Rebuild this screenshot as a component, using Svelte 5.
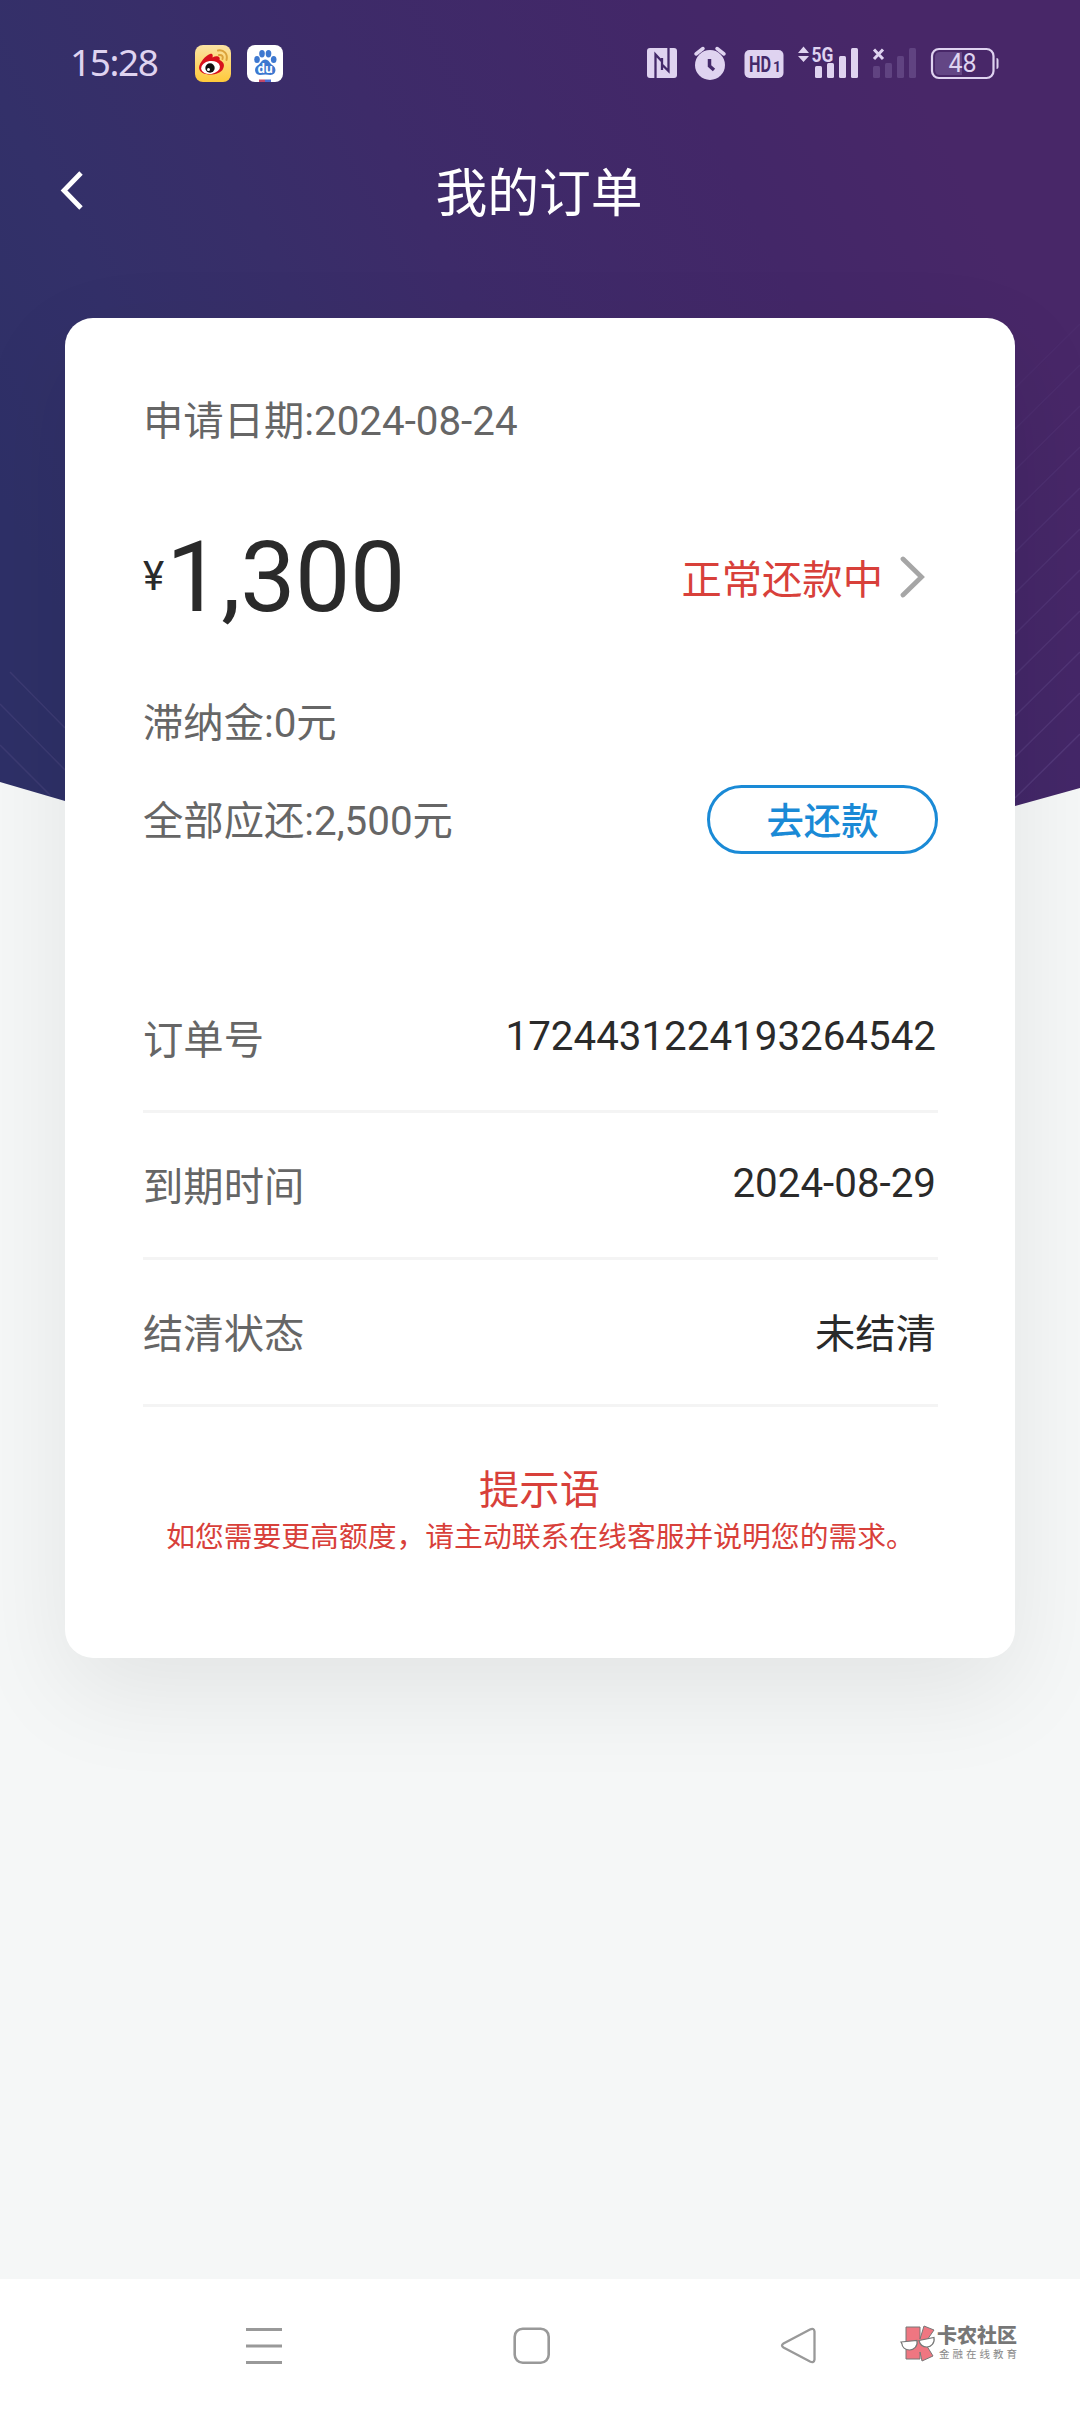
<script>
  const rows = [
    { label: '订单号', value: '1724431224193264542', latin: true },
    { label: '到期时间', value: '2024-08-29', latin: true },
    { label: '结清状态', value: '未结清', latin: false }
  ];
  // Faint diagonal rays on the right side of the banner
  const rays = Array.from({ length: 11 }, (_, i) => ({ y: 798 - i * 41, o: 0.2 - i * 0.014 }));
</script>

<div class="screen">
  <svg class="hero" viewBox="0 0 1080 836" width="1080" height="836" aria-hidden="true">
    <defs>
      <linearGradient id="hero" x1="0" y1="500" x2="900" y2="50" gradientUnits="userSpaceOnUse">
        <stop offset="0" stop-color="#2e3067" />
        <stop offset="0.18" stop-color="#333069" />
        <stop offset="0.35" stop-color="#382e69" />
        <stop offset="0.5" stop-color="#3d2b69" />
        <stop offset="0.8" stop-color="#432768" />
        <stop offset="1" stop-color="#482768" />
      </linearGradient>
    </defs>
    <path d="M0 0H1080V788L1015 806L900 836H190L65 801L0 782Z" fill="url(#hero)" />
    <g stroke="#8b78b8" stroke-width="1.5" fill="none">
      <path d="M10 672L65 728M0 704L65 770M0 745L50 795" stroke-opacity="0.15" />
      {#each rays as ray}
        <path d="M1015 {ray.y}L1080 {ray.y - 64}" stroke-opacity={ray.o} />
      {/each}
    </g>
  </svg>

  <header class="status">
    <span class="clock">15:28</span>
    <svg class="app" viewBox="0 0 36 37" width="36" height="37">
      <defs><linearGradient id="wb" x1="0" y1="0" x2="0" y2="1"><stop offset="0" stop-color="#fbe3a4" /><stop offset="1" stop-color="#ffc93a" /></linearGradient></defs>
      <rect width="36" height="37" rx="8" fill="url(#wb)" />
      <path d="M4 23C4 18 11 10 15 9C18 8 18 11 17.500 12.500C21 10 26 11 24.500 15C29 17 30 20 28 24C25 31 5 32 4 23Z" fill="#d7101d" />
      <ellipse cx="15.500" cy="22.500" rx="9.500" ry="6.500" fill="#fff" transform="rotate(-8 15.500 22.500)" />
      <circle cx="15" cy="23" r="4.700" fill="#111" /><circle cx="13.500" cy="24.500" r="1.500" fill="#fff" />
      <path d="M23 5.500C29 4.500 33 9 31.500 15M24 10C27 9.500 28.500 11.500 27.500 14" fill="none" stroke="#dba23a" stroke-width="2" stroke-linecap="round" />
    </svg>
    <svg class="app second" viewBox="0 0 36 37" width="36" height="37">
      <rect width="36" height="37" rx="8" fill="#fff" />
      <g fill="#3d78d0">
        <ellipse cx="10" cy="14.500" rx="2.800" ry="3.600" /><ellipse cx="15" cy="8.700" rx="2.800" ry="3.700" />
        <ellipse cx="21.500" cy="8.700" rx="2.800" ry="3.700" /><ellipse cx="26.700" cy="14.500" rx="2.800" ry="3.600" />
        <path d="M18.300 14.500C22 14.500 22.500 18.500 26 20.500C30 23 29 30 23.500 30C20 29.200 17 29.200 13 30C7.500 30 6.500 23 10.500 20.500C14 18.500 14.500 14.500 18.300 14.500Z" />
      </g>
      <text class="du" x="18.200" y="27.700" text-anchor="middle">du</text>
      <path d="M12 34.500H18V37H12Z" fill="#c34767" /><path d="M18 34.500H24V37H18Z" fill="#4a6bd0" />
    </svg>
    <svg class="signals" viewBox="0 0 360 44" width="360" height="44">
      <g fill="#dfd3f0">
        <rect x="2" y="7" width="30" height="30" rx="3" />
        <path d="M10.500 37V13.500L17 20.500M23.500 7V30L17 23.500V17M17 23.500V29" fill="none" stroke="#44296a" stroke-width="2.300" />
        <circle cx="65" cy="24" r="15" />
        <path d="M51 13L58 7.500M79 13L72 7.500" stroke="#dfd3f0" stroke-width="3.500" stroke-linecap="round" />
        <path d="M64.500 18V25L69 29" fill="none" stroke="#44296a" stroke-width="3.500" />
        <rect x="99.500" y="9" width="39" height="28" rx="5" />
        <text transform="translate(104 31) scale(.74 1)" class="hd">HD</text>
        <text x="128" y="31" class="one">1</text>
        <path d="M153 12L158.500 5.500L164 12ZM153 15H164L158.500 21Z" />
        <text transform="translate(166.500 20.500) scale(.83 1)" class="g5">5G</text>
        <rect x="170" y="25" width="7" height="12" rx="1.500" /><rect x="182" y="22" width="7" height="15" rx="1.500" />
        <rect x="194" y="15" width="7" height="22" rx="1.500" /><rect x="206" y="7" width="7" height="30" rx="1.500" />
        <path d="M229 8.500L238 18M238 8.500L229 18" stroke="#dfd3f0" stroke-width="3" />
      </g>
      <g fill="#604381">
        <rect x="228" y="25" width="7" height="12" rx="1.500" /><rect x="240" y="22" width="7" height="15" rx="1.500" />
        <rect x="252" y="15" width="7" height="22" rx="1.500" /><rect x="264" y="7" width="7" height="30" rx="1.500" />
      </g>
      <rect x="287" y="8" width="61.500" height="29" rx="7" fill="none" stroke="#dfd3f0" stroke-width="2.200" />
      <path d="M295 11H317V34H295Q290 34 290 29V16Q290 11 295 11Z" fill="#634685" />
      <path d="M351.500 17Q353.500 17 353.500 19V26Q353.500 28 351.500 28Z" fill="#dfd3f0" />
      <text x="317.500" y="31" class="pct" text-anchor="middle">48</text>
    </svg>
  </header>

  <nav class="titlebar">
    <svg class="back" viewBox="0 0 24 40" width="24" height="40"><path d="M21 2L4 19.500L21 37" fill="none" stroke="#fff" stroke-width="4.800" /></svg>
    <h1>我的订单</h1>
  </nav>

  <main class="card">
    <p class="line date">申请日期:2024-08-24</p>
    <div class="amount-row">
      <div class="amount"><span class="yen">¥</span><span class="num">1,300</span></div>
      <div class="state">
        <span>正常还款中</span>
        <svg viewBox="0 0 26 42" width="26" height="42"><path d="M3 3L21.500 21L3 39" fill="none" stroke="#a6a6a6" stroke-width="4.800" stroke-linecap="round" /></svg>
      </div>
    </div>
    <p class="line late">滞纳金:0元</p>
    <div class="due-row">
      <p class="line">全部应还:2,500元</p>
      <button type="button">去还款</button>
    </div>
    <dl>
      {#each rows as row}
        <div class="row"><dt>{row.label}</dt><dd class:latin={row.latin}>{row.value}</dd></div>
      {/each}
    </dl>
    <h2>提示语</h2>
    <p class="tip">如您需要更高额度，请主动联系在线客服并说明您的需求。</p>
  </main>

  <footer>
    <svg class="menu" viewBox="0 0 38 38" width="38" height="38"><path d="M1 2.500H37M1 19H37M1 35.500H37" stroke="#999" stroke-width="3" /></svg>
    <svg class="home" viewBox="0 0 38 38" width="38" height="38"><rect x="1.700" y="1.700" width="34" height="34" rx="8" fill="none" stroke="#999" stroke-width="2.600" /></svg>
    <svg class="prev" viewBox="0 0 38 38" width="38" height="38"><path d="M30 2.500Q34 .5 34.500 4.500V32.500Q34 36.500 30 34.500L3.500 20.500Q0.500 18.500 3.500 16.500Z" fill="none" stroke="#999" stroke-width="2.300" /></svg>
    <div class="brand">
      <svg viewBox="0 0 36 38" width="36" height="38">
        <g fill="#ef7681" stroke="#777" stroke-width="1"><path d="M6 3H20V15L24 2L34 6L25 19L33 32L22 37L20 28V35H6Z" /></g>
        <path d="M1 18L17 16.500C18 22 14 26 9.500 26C5 26 2 23 2 20ZM19 16.500L34 13.500C35 19 31 23 27 23C22.500 23 20 21 19 16.500Z" fill="#fff" stroke="#777" stroke-width="1.200" />
      </svg>
      <div class="words"><strong>卡农社区</strong><small>金融在线教育</small></div>
    </div>
  </footer>
</div>

<style>
  :global(body) { margin: 0; background: #f5f7f7; }
  .screen {
    position: relative; width: 1080px; height: 2412px; overflow: hidden;
    display: flex; flex-direction: column; background: #f5f7f7;
    font-family: Roboto, "Noto Sans CJK SC", sans-serif; color: #2a2a2a;
  }
  .hero { position: absolute; top: 0; left: 0; }
  .status, .titlebar, .card, footer { position: relative; box-sizing: border-box; }
  p, h1, h2, dl, dd, dt { margin: 0; font-weight: 400; }
  svg { display: block; flex: none; }

  .status { height: 126px; padding: 0 70px; display: flex; align-items: center; color: #dfd3f0; }
  .clock { width: 125px; font: 37px/44px "Noto Sans", sans-serif; letter-spacing: -1.4px; padding-bottom: 2px; }
  .second { margin-left: 16px; }
  .signals { margin-left: 362px; }
  .du { font: 700 12px "Open Sans", sans-serif; fill: #fff; }
  .hd { font: 700 22px Roboto, sans-serif; fill: #44296a; }
  .one { font: 700 14px Roboto, sans-serif; fill: #44296a; }
  .g5 { font: 700 21px Roboto, sans-serif; }
  .pct { font: 25px Roboto, sans-serif; fill: #dfd3f0; }

  .titlebar { height: 192px; padding: 45px 60px 0 60px; display: flex; align-items: flex-start; }
  h1 { flex: 1; margin-right: 26px; padding-top: 3px; text-align: center; color: #fff; font-size: 51.800px; line-height: 42px; }

  .card {
    width: 950px; height: 1340px; margin: 0 auto; padding: 74px 77px 0 78px;
    border-radius: 28px; background: #fff; box-shadow: 0 34px 100px rgba(0, 0, 0, .08);
  }
  .line { font-size: 40.320px; line-height: 60px; color: #666; white-space: nowrap; }
  .amount-row { margin-top: 65px; height: 120px; display: flex; justify-content: space-between; align-items: center; }
  .amount { display: flex; align-items: center; }
  .yen { font-size: 40.320px; line-height: 46px; }
  .num { font-size: 98.500px; line-height: 115px; margin-left: 2px; letter-spacing: -.4px; }
  .state { display: flex; align-items: center; gap: 17px; margin-right: 12px; color: #d8403a; font-size: 40.320px; line-height: 60px; }
  .state span { padding-top: 7px; }
  .late { margin-top: 57px; }
  .due-row { margin-top: 30px; height: 70px; display: flex; align-items: center; justify-content: space-between; }
  .due-row .line { padding-top: 5px; }
  button {
    box-sizing: border-box; width: 231px; height: 69px; padding: 5px 0 0; border: 3px solid #1a8ad6; border-radius: 35px;
    background: #fff; color: #1a8ad6; font: 500 37.400px/58px Roboto, "Noto Sans CJK SC", sans-serif;
  }
  dl { margin-top: 112px; }
  .row {
    box-sizing: border-box; height: 147px; display: flex; align-items: center; justify-content: space-between;
    border-bottom: 3px solid #f4f4f4; font-size: 40.320px; line-height: 60px;
  }
  dt, dd { padding-top: 5px; }
  dd { padding-right: 2px; }
  dd.latin { padding: 0 2px 2px 0; }
  dt { color: #666; }
  h2 { margin: 54px 2px 0 0; font-size: 40.320px; line-height: 60px; color: #d8403a; text-align: center; }
  .tip { margin-top: -1px; font-size: 28.800px; line-height: 34px; color: #d8403a; text-align: center; white-space: nowrap; }

  footer { height: 133px; margin-top: auto; background: #fff; display: flex; align-items: center; padding-left: 245px; }
  .home { margin-left: 230px; }
  .prev { margin-left: 229px; }
  .brand { margin-left: 82px; display: flex; align-items: center; gap: 1px; margin-top: -5px; }
  .words { display: flex; flex-direction: column; color: #777; }
  .words strong { font-size: 20px; line-height: 23px; font-weight: 900; }
  .words small { font-size: 10.500px; line-height: 15px; letter-spacing: 3px; color: #888; margin: -1px 0 0 2px; }
</style>
